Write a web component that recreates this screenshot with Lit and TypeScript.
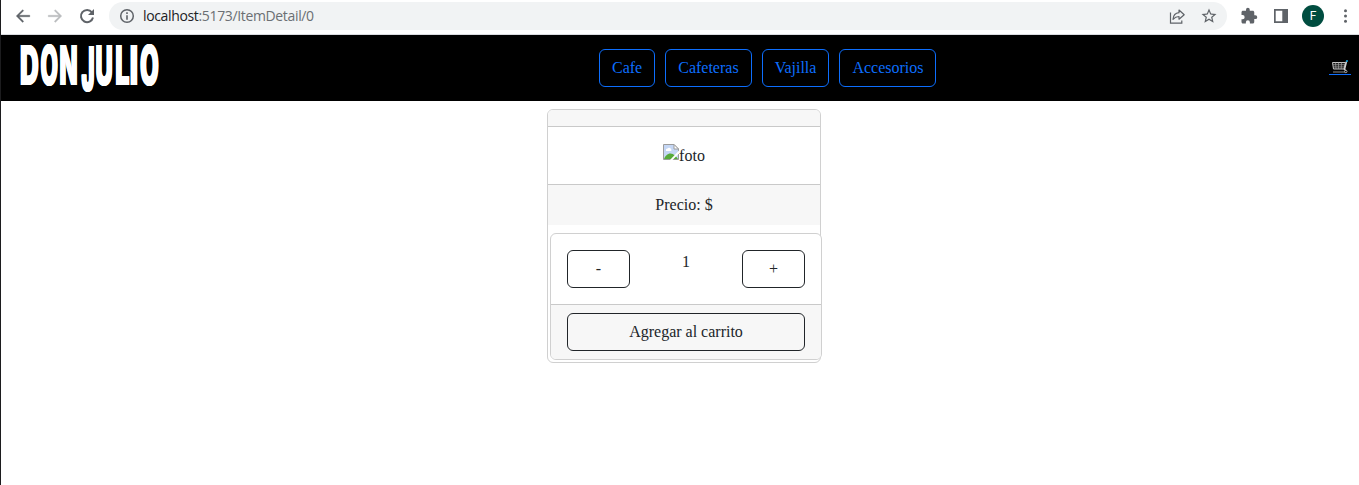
import { LitElement, html, css, svg } from "lit";
import { customElement, state } from "lit/decorators.js";

const LOGO = [
  { ch: "D", x: 19, w: 18.8, y: 50.3, size: 55 },
  { ch: "O", x: 39.4, w: 17.6, y: 50.3, size: 55 },
  { ch: "N", x: 58.4, w: 18.2, y: 50.3, size: 55 },
  { ch: "J", x: 80.4, w: 13.2, y: 55.8, size: 62 },
  { ch: "U", x: 94.4, w: 17.4, y: 50.3, size: 55 },
  { ch: "L", x: 114.2, w: 14.4, y: 50.3, size: 55 },
  { ch: "I", x: 128.8, w: 8.2, y: 50.3, size: 55 },
  { ch: "O", x: 139, w: 18.8, y: 50.3, size: 55 },
];

@customElement("browser-bar")
class BrowserBar extends LitElement {
  static styles = css`
    :host { display: flex; box-sizing: border-box; height: 35px; align-items: center; background: #fff;
      border-bottom: 1px solid #dadce0; padding: 0 4px 3px 13px; color: #5f6368; }
    svg { display: block; flex: none; }
    .fwd { margin-left: 14px; color: #babcbe; }
    .reload { margin-left: 14px; }
    .address { display: flex; align-items: center; flex: 1; height: 28px; box-sizing: border-box;
      margin-left: 13px; padding: 0 9px 0 9px; border-radius: 14px; background: #f1f3f4; }
    .url { flex: 1; margin-left: 7px; font: 14px/20px "Open Sans", sans-serif; letter-spacing: -0.35px; color: #6b6f73; }
    .host { color: #202124; }
    .star { margin-left: 14px; }
    .ext { margin-left: 13px; }
    .panel { margin-left: 14px; }
    .avatar { margin-left: 12px; width: 22px; height: 22px; border-radius: 50%; background: #004d40; color: #fff;
      font: 12px/22px Roboto, sans-serif; text-align: center; }
    .more { margin-left: 13px; }
  `;
  render() {
    return html`
      <svg width="18" height="18" viewBox="0 0 24 24" fill="currentColor" stroke="currentColor" stroke-width=".5"><path d="M21 11H6.800l6.100-6.100L11.500 3.500 3 12l8.500 8.500 1.400-1.400L6.800 13H21z"/></svg>
      <svg class="fwd" width="18" height="18" viewBox="0 0 24 24" fill="currentColor" stroke="currentColor" stroke-width=".5"><path d="M3 11h14.200l-6.100-6.100L12.500 3.500 21 12l-8.500 8.500-1.400-1.400 6.100-6.100H3z"/></svg>
      <svg class="reload" width="18" height="18" viewBox="0 0 18 18"><path d="M13.900 5.300A6.100 6.100 0 1 0 15 10.500" fill="none" stroke="currentColor" stroke-width="2"/><path d="M16 2v6h-6z" fill="currentColor"/></svg>
      <div class="address">
        <svg width="18" height="18" viewBox="0 0 18 18"><circle cx="9" cy="9" r="6.300" fill="none" stroke="currentColor" stroke-width="1.500"/><path d="M8.200 5.300h1.600v1.600H8.200zM8.200 8.200h1.600v4.500H8.200z" fill="currentColor"/></svg>
        <span class="url"><span class="host">localhost</span>:5173/ItemDetail/0</span>
        <svg width="18" height="18" viewBox="0 0 18 18" fill="none" stroke="currentColor" stroke-width="1.200"><path d="M2.500 5.500v10.700h11.300v-2.700"/><path d="M5 12.300C5.400 8 7.700 6 11 5.700V3l5.200 4.700L11 12.200V9.500C8.500 9.500 6.600 10.400 5 12.300z" stroke-linejoin="round"/></svg>
        <svg class="star" width="18" height="18" viewBox="0 0 24 24" fill="currentColor"><path d="M22 9.240l-7.190-.620L12 2 9.190 8.630 2 9.240l5.460 4.730L5.820 21 12 17.270 18.180 21l-1.630-7.030zM12 15.400l-3.760 2.270 1-4.280-3.320-2.880 4.380-.380L12 6.100l1.710 4.040 4.380.380-3.320 2.880 1 4.280z"/></svg>
      </div>
      <svg class="ext" width="18" height="18" viewBox="0 0 24 24" fill="currentColor"><path d="M20.500 11H19V7c0-1.100-.9-2-2-2h-4V3.500a2.500 2.500 0 0 0-5 0V5H4c-1.100 0-1.990.9-1.990 2v3.800H3.500a2.700 2.700 0 0 1 0 5.400H2V20c0 1.100.9 2 2 2h3.800v-1.500a2.700 2.700 0 0 1 5.400 0V22H17c1.100 0 2-.9 2-2v-4h1.500a2.500 2.500 0 0 0 0-5z"/></svg>
      <svg class="panel" width="18" height="18" viewBox="0 0 18 18"><path d="M2 2h14v14H2zM3.700 3.700v10.600h6.600V3.700z" fill="currentColor" fill-rule="evenodd"/></svg>
      <div class="avatar">F</div>
      <svg class="more" width="18" height="18" viewBox="0 0 18 18" fill="currentColor"><circle cx="8.500" cy="3.700" r="1.500"/><circle cx="8.500" cy="9" r="1.500"/><circle cx="8.500" cy="14.200" r="1.500"/></svg>
    `;
  }
}

@customElement("nav-bar")
class NavBar extends LitElement {
  static styles = css`
    :host { display: flex; justify-content: space-between; align-items: center; height: 66px; padding-right: 8px; background: #000; }
    .logo { display: block; overflow: visible; }
    .logo text { font-family: Inter, sans-serif; font-weight: 900; fill: #fff; text-shadow: 0.9px 0 #fff, -0.9px 0 #fff; }
    .links { display: flex; gap: 10px; }
    .link { box-sizing: border-box; height: 38px; padding: 6px 12px; border: 1px solid #0d6efd; border-radius: 6px;
      color: #0d6efd; font: 16px/24px "Liberation Serif", serif; text-decoration: none; }
    .cart svg { display: block; }
  `;
  render() {
    return html`
      <svg class="logo" width="205.500" height="66" viewBox="0 0 205.500 66">
        ${LOGO.map((l) => svg`<text x=${l.x} y=${l.y} font-size=${l.size} textLength=${l.w} lengthAdjust="spacingAndGlyphs">${l.ch}</text>`)}
      </svg>
      <nav class="links">
        ${["Cafe", "Cafeteras", "Vajilla", "Accesorios"].map((t) => html`<a class="link" href="#">${t}</a>`)}
      </nav>
      <a class="cart" href="#" aria-label="Carrito">
        <svg width="22" height="16" viewBox="0 0 22 16" fill="none">
          <path d="M3.500 2.500H16.500L15 9H4.500z" fill="#1c1c1c" stroke="#c4c4c4"/>
          <path d="M6.500 2.500l.5 6.500M9.500 2.500V9M12.500 2.500l-.3 6.500M4 4.700h12M4.300 6.900h11" stroke="#a2a2a2" stroke-width=".7"/>
          <path d="M17.500 1.500L15.500 9.500l1.500 1" stroke="#d0d0d0" stroke-width="1.400"/>
          <path d="M4 12h12" stroke="#454545" stroke-width="2"/><circle cx="16.800" cy="11.500" r="1.200" stroke="#aaa"/>
          <path d="M17 1h2" stroke="#0aa5e8" stroke-width="1.500"/>
          <path d="M0 14.500h22" stroke="#0d6efd"/>
        </svg>
      </a>
    `;
  }
}

@customElement("item-count")
class ItemCount extends LitElement {
  @state() count = 1;
  static styles = css`
    :host { display: block; box-sizing: border-box; width: 272px; border: 1px solid #d0d0d0; border-radius: 6px;
      background: #fff; overflow: hidden; font: 16px/24px "Liberation Serif", serif; color: #212529; text-align: center; }
    .body { display: flex; justify-content: space-between; padding: 16px; height: 70px; box-sizing: border-box; }
    .foot { border-top: 1px solid #c9c9c9; background: #f7f7f7; padding: 8px 16px; }
    .btn { box-sizing: border-box; height: 38px; padding: 6px 12px; border: 1px solid #212529; border-radius: 6px;
      background: transparent; font: inherit; color: inherit; }
    .step { width: 63px; }
    .full { display: block; width: 100%; }
  `;
  render() {
    return html`
      <div class="body">
        <button class="btn step" @click=${() => (this.count = Math.max(1, this.count - 1))}>-</button>
        <span>${this.count}</span>
        <button class="btn step" @click=${() => this.count++}>+</button>
      </div>
      <div class="foot"><button class="btn full">Agregar al carrito</button></div>
    `;
  }
}

@customElement("app-root")
class AppRoot extends LitElement {
  static styles = css`
    :host { display: block; box-sizing: border-box; height: 485px; border-left: 1px solid #1c1c1e; background: #fff;
      overflow: hidden; font: 16px/24px "Liberation Serif", serif; color: #212529; }
    .card { box-sizing: border-box; width: 274px; height: 254px; margin: 8px 0 0 546px; border: 1px solid #d0d0d0;
      border-radius: 6px; text-align: center; }
    .head { height: 16px; border-bottom: 1px solid #c9c9c9; border-radius: 5px 5px 0 0; background: #f7f7f7; }
    .photo { display: flex; justify-content: center; height: 57px; box-sizing: border-box; padding-top: 17px; }
    .photo svg { display: block; }
    .price { height: 40px; line-height: 40px; border-top: 1px solid #c9c9c9; background: #f7f7f7; }
    .counter { margin: 8px 0 0 2px; }
  `;
  render() {
    return html`
      <browser-bar></browser-bar>
      <nav-bar></nav-bar>
      <main class="card">
        <div class="head"></div>
        <div class="photo">
          <svg width="16" height="16" viewBox="0 0 16 16">
            <path d="M.5 .5H11L15.500 5V15.500H.5z" fill="#c5d7f5" stroke="#9c9c9c"/>
            <path d="M11 .5V5h4.500z" fill="#fff" stroke="#9c9c9c"/>
            <path d="M3 6.500a1.500 1.500 0 0 1 1.500-2 2 2 0 0 1 3.500.8 1 1 0 0 1 0 1.700H3z" fill="#fff"/>
            <path d="M1 15c1-3 3.500-5.500 6.500-5.500 3 0 5.500 2.500 7.500 5.500z" fill="#57ab3b"/>
            <path d="M16 6.500v3L9.500 16H7z" fill="#fff"/>
          </svg>
          <span>foto</span>
        </div>
        <div class="price">Precio: $</div>
        <item-count class="counter"></item-count>
      </main>
    `;
  }
}
